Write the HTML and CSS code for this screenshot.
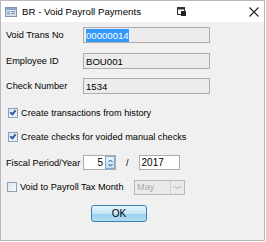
FILE: index.html
```html
<!DOCTYPE html>
<html lang="en">
<head>
    <meta charset="UTF-8" />
    <title>BR - Void Payroll Payments</title>
    <link rel="stylesheet" href="styles.css">
</head>
<body>
    <div class="window">
        <div class="titlebar">
            <svg class="app-icon" width="12" height="10" viewBox="0 0 12 10">
                <rect x="0.5" y="0.5" width="11" height="9" fill="#d6e2ef" stroke="#7f93ad" />
                <rect x="1" y="1" width="10" height="2" fill="#8aa6c8" />
                <rect x="2" y="4" width="3" height="4" fill="#a9b8c9" />
                <rect x="6" y="4" width="4" height="1" fill="#8796a8" />
                <rect x="6" y="6" width="4" height="1" fill="#8796a8" />
            </svg>
            <span class="title">BR - Void Payroll Payments</span>
            <svg class="restore-icon" width="9" height="9" viewBox="0 0 9 9">
                <rect x="0.5" y="0.5" width="7" height="7" fill="#fff" stroke="#333" />
                <rect x="0.5" y="0.5" width="7" height="2" fill="#333" />
                <rect x="4" y="4" width="5" height="5" fill="#222" />
            </svg>
            <svg class="close-icon" width="10" height="10" viewBox="0 0 10 10">
                <path d="M0.5 0.5 L9.5 9.5 M9.5 0.5 L0.5 9.5" stroke="#222" stroke-width="1.1" />
            </svg>
        </div>

        <div class="content">
            <div class="row row-first">
                <label>Void Trans No</label>
                <div class="field readonly"><span class="selected">00000014</span></div>
            </div>
            <div class="row row-second">
                <label>Employee ID</label>
                <div class="field readonly">BOU001</div>
            </div>
            <div class="row row-third">
                <label>Check Number</label>
                <div class="field readonly">1534</div>
            </div>

            <div class="check-row check-first">
                <span class="checkbox checked"></span>
                <span>Create transactions from history</span>
            </div>
            <div class="check-row check-second">
                <span class="checkbox checked"></span>
                <span>Create checks for voided manual checks</span>
            </div>

            <div class="row row-fiscal">
                <label>Fiscal Period/Year</label>
                <div class="spin">
                    <span class="spin-value">5</span>
                    <span class="spin-btn">
                        <svg width="5" height="8" viewBox="0 0 5 8">
                            <path d="M0.5 3 L2.5 1 L4.5 3 M0.5 5 L2.5 7 L4.5 5" fill="none" stroke="#2a4e7c" stroke-width="1" />
                        </svg>
                    </span>
                </div>
                <span class="slash">/</span>
                <div class="year">2017</div>
            </div>

            <div class="check-row check-tax">
                <span class="checkbox"></span>
                <span class="tax-label">Void to Payroll Tax Month</span>
                <div class="combo">
                    <span>May</span>
                    <span class="combo-btn">
                        <svg width="9" height="5" viewBox="0 0 9 5">
                            <path d="M0 2 H3 M3 2 L4.5 4 L6 2 M6 2 H9" fill="none" stroke="#b5b5b5" stroke-width="1" />
                        </svg>
                    </span>
                </div>
            </div>

            <div class="buttons">
                <button class="ok">OK</button>
            </div>
        </div>
    </div>
</body>
</html>
```

FILE: styles.css
```css
* {
    margin: 0;
    padding: 0;
    box-sizing: border-box;
}
body {
    font-family: 'Liberation Sans', Arial, sans-serif;
    font-size: 9.2px;
    color: #000;
    background: #ffffff;
    width: 266px;
    height: 242px;
    overflow: hidden;
}
.window {
    width: 265px;
    height: 241px;
    border: 1px solid #b9b9b9;
    background-color: #f0f0f0;
    display: flex;
    flex-direction: column;
}
.titlebar {
    height: 21px;
    background-color: #ffffff;
    display: flex;
    align-items: center;
    padding-left: 4px;
}
.app-icon {
    margin-right: 5px;
}
.title {
    font-size: 9.7px;
    color: #000;
    flex: 1;
}
.restore-icon {
    margin-right: 63px;
}
.close-icon {
    margin-right: 5px;
}
.content {
    padding-left: 5px;
    flex: 1;
    display: flex;
    flex-direction: column;
}
.row {
    display: flex;
    align-items: center;
    height: 16px;
}
.row label {
    width: 77px;
    color: #000;
}
.row-first { margin-top: 5px; }
.row-second { margin-top: 10px; }
.row-third { margin-top: 9px; }
.row-fiscal { margin-top: 10px; height: 15px; }
.field {
    width: 127px;
    height: 16px;
    border: 1px solid #acacac;
    padding-left: 2px;
    font-size: 9.6px;
    display: flex;
    align-items: center;
}
.readonly {
    background-color: #ececec;
}
.selected {
    background-color: #3399ff;
    color: #ffffff;
    padding: 1px 0;
    line-height: 11px;
}
.check-row {
    display: flex;
    align-items: center;
    height: 16px;
}
.check-first { margin-top: 11px; }
.check-second { margin-top: 8px; }
.check-tax { margin-top: 9px; }
.checkbox {
    width: 10px;
    height: 10px;
    margin-left: 2px;
    margin-right: 3px;
    border: 1px solid #8f9fb5;
    background: linear-gradient(135deg, #dde6f0, #f6f8fa);
    position: relative;
}
.checkbox.checked::after {
    content: "";
    position: absolute;
    left: 2px;
    top: 0px;
    width: 2px;
    height: 4px;
    border-right: 2px solid #2a5db0;
    border-bottom: 2px solid #2a5db0;
    transform: rotate(40deg);
}
.check-tax .checkbox {
    margin-left: 1px;
}
.tax-label {
    width: 114px;
}
.spin {
    width: 33px;
    height: 15px;
    border: 1px solid #acacac;
    background: #ffffff;
    display: flex;
    align-items: center;
    justify-content: flex-end;
}
.spin-value {
    font-size: 10px;
    margin-right: 2px;
}
.spin-btn {
    width: 10px;
    height: 13px;
    background: linear-gradient(#eaf4fc, #b9dcf5);
    border: 1px solid #7ea9d0;
    display: flex;
    align-items: center;
    justify-content: center;
}
.slash {
    margin-left: 10px;
    margin-right: 10px;
}
.year {
    width: 41px;
    height: 15px;
    border: 1px solid #acacac;
    background: #ffffff;
    padding-left: 2px;
    font-size: 10px;
    display: flex;
    align-items: center;
}
.combo {
    width: 51px;
    height: 15px;
    border: 1px solid #b8b8b8;
    background: #eaeaea;
    color: #a8a8a8;
    padding-left: 2px;
    display: flex;
    align-items: center;
    justify-content: space-between;
}
.combo-btn {
    width: 14px;
    height: 13px;
    border-left: 1px solid #d0d0d0;
    display: flex;
    align-items: center;
    justify-content: center;
}
.buttons {
    display: flex;
    padding-left: 85px;
    margin-top: 10px;
}
.ok {
    width: 56px;
    height: 17px;
    font-family: 'Liberation Sans', Arial, sans-serif;
    font-size: 10px;
    color: #000;
    border: 1px solid #3c7fb1;
    border-radius: 3px;
    background: linear-gradient(#e5f4fc 0%, #c4e5f6 50%, #98d1ef 51%, #b5ddf3 100%);
}
```
